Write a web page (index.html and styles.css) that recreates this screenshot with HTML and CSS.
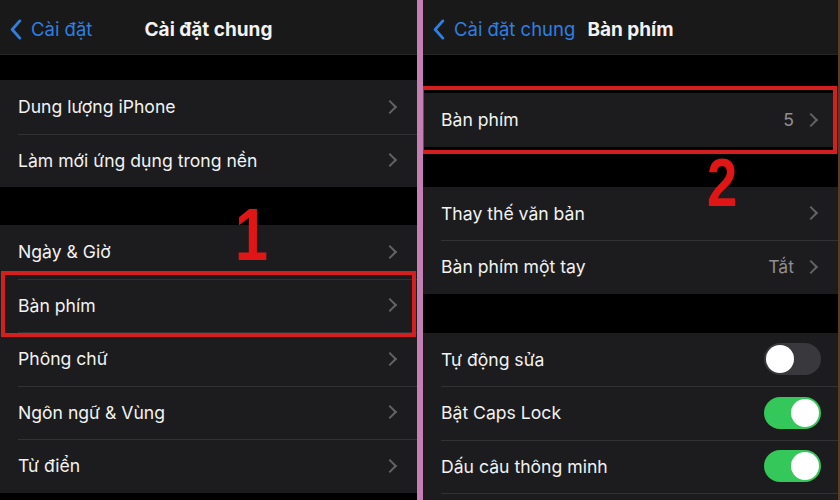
FILE: index.html
```html
<!DOCTYPE html>
<html lang="vi">
<head>
    <meta charset="UTF-8">
    <meta name="viewport" content="width=device-width, initial-scale=1.0">
    <title>Cài đặt bàn phím</title>
    <link rel="stylesheet" href="styles.css">
</head>
<body>
    <div class="screens">
        <!-- Màn hình 1: Cài đặt chung -->
        <div class="screen">
            <div class="navbar">
                <div class="back">
                    <svg class="back-icon" viewBox="0 0 12 22" width="12" height="21"><path d="M10 2 L2 11 L10 20" fill="none" stroke="currentColor" stroke-width="3" stroke-linecap="round" stroke-linejoin="round"/></svg>
                    <span>Cài đặt</span>
                </div>
                <div class="title">Cài đặt chung</div>
            </div>

            <div class="group first-left">
                <div class="row"><span class="label">Dung lượng iPhone</span><span class="chev"></span></div>
                <div class="row"><span class="label">Làm mới ứng dụng trong nền</span><span class="chev"></span></div>
            </div>

            <div class="group gap-left">
                <div class="row"><span class="label">Ngày &amp; Giờ</span><span class="chev"></span></div>
                <div class="row marked mark-left"><span class="label">Bàn phím</span><span class="chev"></span></div>
                <div class="row"><span class="label">Phông chữ</span><span class="chev"></span></div>
                <div class="row"><span class="label">Ngôn ngữ &amp; Vùng</span><span class="chev"></span></div>
                <div class="row"><span class="label">Từ điển</span><span class="chev"></span></div>
            </div>

            <div class="step step-one">1</div>
        </div>

        <div class="divider"></div>

        <!-- Màn hình 2: Bàn phím -->
        <div class="screen right">
            <div class="navbar">
                <div class="back">
                    <svg class="back-icon" viewBox="0 0 12 22" width="12" height="21"><path d="M10 2 L2 11 L10 20" fill="none" stroke="currentColor" stroke-width="3" stroke-linecap="round" stroke-linejoin="round"/></svg>
                    <span>Cài đặt chung</span>
                </div>
                <div class="title">Bàn phím</div>
            </div>

            <div class="group first-right">
                <div class="row marked mark-right"><span class="label">Bàn phím</span><span class="value">5</span><span class="chev"></span></div>
            </div>

            <div class="group gap-right">
                <div class="row"><span class="label">Thay thế văn bản</span><span class="chev"></span></div>
                <div class="row"><span class="label">Bàn phím một tay</span><span class="value">Tắt</span><span class="chev"></span></div>
            </div>

            <div class="group gap-right-2">
                <div class="row"><span class="label">Tự động sửa</span><span class="toggle"></span></div>
                <div class="row"><span class="label">Bật Caps Lock</span><span class="toggle on"></span></div>
                <div class="row"><span class="label">Dấu câu thông minh</span><span class="toggle on"></span></div>
                <div class="row"></div>
            </div>

            <div class="step step-two">2</div>
        </div>
    </div>
</body>
</html>
```

FILE: styles.css
```css
html, body {
    margin: 0;
    padding: 0;
    background: #000;
}
body {
    font-family: Inter, "Noto Sans", Roboto, sans-serif;
    color: #f2f2f2;
    width: 840px;
    height: 500px;
    overflow: hidden;
}
.screens {
    display: flex;
    height: 500px;
}
.screen {
    position: relative;
    width: 417px;
    height: 500px;
    background: #000;
    overflow: hidden;
}
.screen.right {
    width: 415px;
    border-right: 2px solid #5a3d24;
}
.divider {
    width: 6px;
    background: #c47fb5;
}
.navbar {
    position: relative;
    height: 54px;
    background: #191919;
    border-bottom: 1px solid #262626;
    display: flex;
    align-items: center;
}
.back {
    display: flex;
    align-items: center;
    gap: 9px;
    padding-left: 10px;
    color: #2f7fe0;
    font-size: 18.5px;
    padding-top: 4px;
}
.back-icon {
    display: block;
}
.title {
    position: absolute;
    left: 0;
    right: 0;
    top: 4px;
    bottom: 0;
    display: flex;
    align-items: center;
    justify-content: center;
    font-size: 19px;
    font-weight: 700;
    pointer-events: none;
}
.group {
    background: #1c1c1e;
}
.first-left {
    margin-top: 25px;
}
.gap-left {
    margin-top: 38px;
}
.first-right {
    margin-top: 38px;
}
.gap-right {
    margin-top: 40px;
}
.gap-right-2 {
    margin-top: 39px;
}
.row {
    position: relative;
    height: 53.5px;
    display: flex;
    align-items: center;
    padding: 0 19px 0 18px;
    font-size: 17.6px;
}
.row + .row::before {
    content: "";
    position: absolute;
    left: 18px;
    right: 0;
    top: 0;
    height: 1px;
    background: #323234;
}
.label {
    flex: 1;
}
.value {
    color: #8e8e93;
    margin-right: 12px;
}
.chev {
    width: 8px;
    height: 8px;
    border-top: 2px solid #636366;
    border-right: 2px solid #636366;
    transform: rotate(45deg);
    margin-right: 3px;
}
.toggle {
    position: relative;
    width: 57px;
    height: 32px;
    border-radius: 16px;
    background: #39393d;
    margin-right: -2px;
}
.toggle::after {
    content: "";
    position: absolute;
    top: 2px;
    left: 2px;
    width: 28px;
    height: 28px;
    border-radius: 50%;
    background: #fff;
}
.toggle.on {
    background: #34c759;
}
.toggle.on::after {
    left: 27px;
}
.marked::after {
    content: "";
    position: absolute;
    border: 4px solid #d41f1f;
    z-index: 2;
}
.mark-left::after {
    left: 1px;
    right: 1px;
    top: -8px;
    bottom: -5px;
}
.mark-right::after {
    left: -3px;
    right: 1px;
    top: -7px;
    bottom: -7px;
}
.step {
    position: absolute;
    font-family: "Liberation Sans", Arial, sans-serif;
    font-weight: 700;
    color: #e01616;
    line-height: 1;
    transform: scaleX(0.8);
    transform-origin: left top;
    z-index: 3;
}
.step-one {
    left: 235px;
    top: 198px;
    font-size: 74px;
}
.step-two {
    left: 284px;
    top: 148px;
    font-size: 68px;
}
```
